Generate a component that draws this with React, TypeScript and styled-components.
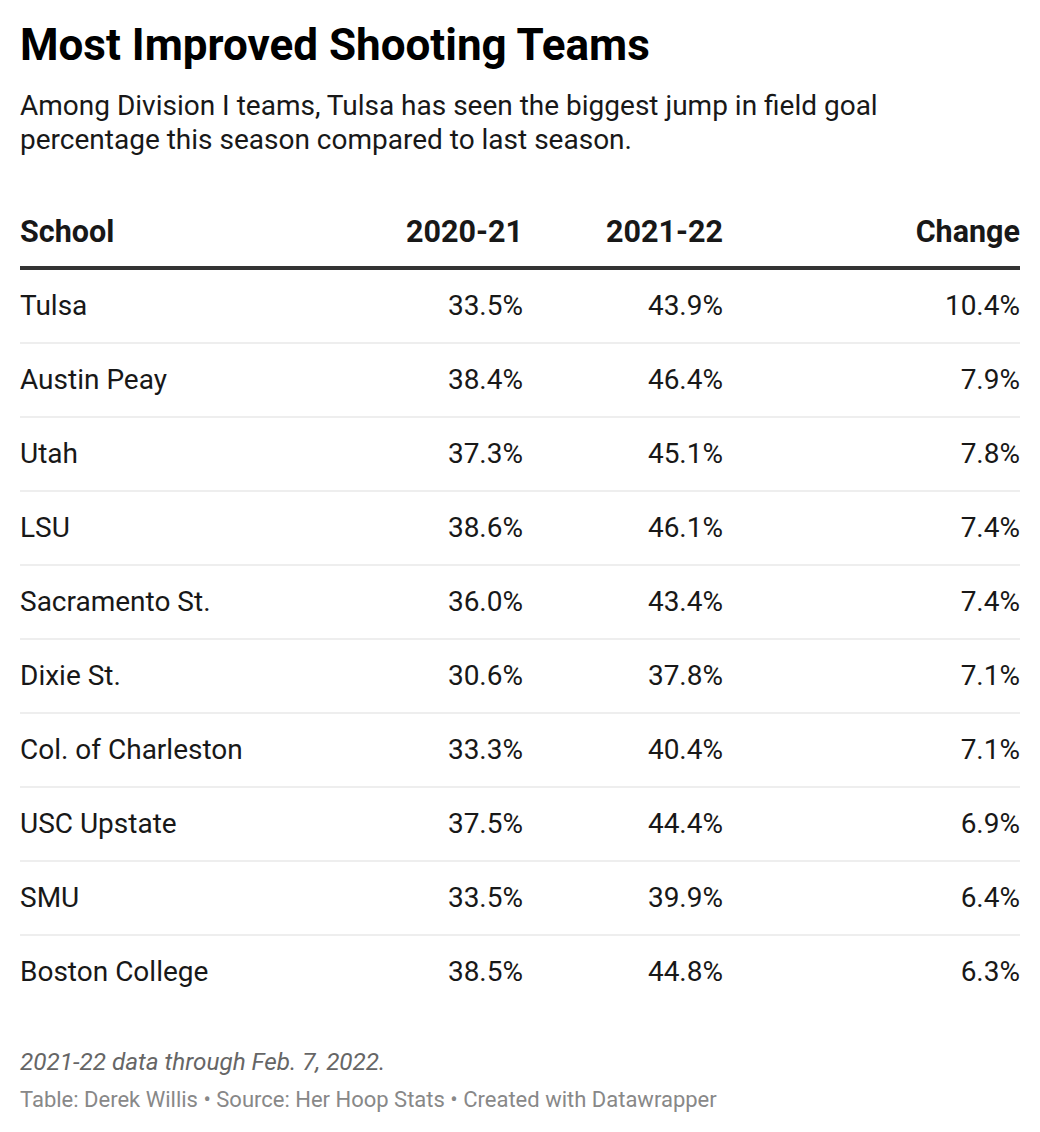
import styled, { createGlobalStyle } from "styled-components";

const rows: [string, string, string, string][] = [
  ["Tulsa", "33.5%", "43.9%", "10.4%"],
  ["Austin Peay", "38.4%", "46.4%", "7.9%"],
  ["Utah", "37.3%", "45.1%", "7.8%"],
  ["LSU", "38.6%", "46.1%", "7.4%"],
  ["Sacramento St.", "36.0%", "43.4%", "7.4%"],
  ["Dixie St.", "30.6%", "37.8%", "7.1%"],
  ["Col. of Charleston", "33.3%", "40.4%", "7.1%"],
  ["USC Upstate", "37.5%", "44.4%", "6.9%"],
  ["SMU", "33.5%", "39.9%", "6.4%"],
  ["Boston College", "38.5%", "44.8%", "6.3%"],
];

const GlobalStyle = createGlobalStyle`
  body {
    margin: 0;
    background: #fff;
    font-family: Roboto, "Liberation Sans", sans-serif;
  }
`;

const App = () => {
  return (
    <>
      <GlobalStyle />
      <Wrapper>
        <Title>Most Improved Shooting Teams</Title>
        <Description>
          Among Division I teams, Tulsa has seen the biggest jump in field goal
          percentage this season compared to last season.
        </Description>
        <Table>
          <HeaderRow>
            <HeadCell>School</HeadCell>
            <HeadCell $right>2020-21</HeadCell>
            <HeadCell $right>2021-22</HeadCell>
            <HeadCell $right>Change</HeadCell>
          </HeaderRow>
          {rows.map((r, i) => (
            <Row key={r[0]} $last={i === rows.length - 1}>
              <Cell>{r[0]}</Cell>
              <Cell $right>{r[1]}</Cell>
              <Cell $right>{r[2]}</Cell>
              <Cell $right>{r[3]}</Cell>
            </Row>
          ))}
        </Table>
        <Notes>2021-22 data through Feb. 7, 2022.</Notes>
        <Byline>
          Table: Derek Willis • Source: Her Hoop Stats • Created with Datawrapper
        </Byline>
      </Wrapper>
    </>
  );
};

const Wrapper = styled.div`
  padding: 21px 20px 20px;
  color: #181818;
`;

const Title = styled.h1`
  margin: 0;
  font-size: 44px;
  line-height: 48px;
  font-weight: 700;
  color: #000;
`;

const Description = styled.p`
  margin: 20px 0 0;
  font-size: 28px;
  line-height: 34px;
  color: #181818;
`;

const Table = styled.div`
  margin-top: 41px;
  display: grid;
  grid-template-columns: 303px 200px 200px 297px;
`;

const HeaderRow = styled.div`
  display: contents;
`;

const HeadCell = styled.div<{ $right?: boolean }>`
  padding: 19px 0;
  font-size: 30.5px;
  line-height: 30px;
  font-weight: 700;
  color: #181818;
  text-align: ${(p) => (p.$right ? "right" : "left")};
  border-bottom: 4px solid #333;
`;

const Row = styled.div<{ $last?: boolean }>`
  display: contents;

  & > div {
    border-bottom: ${(p) => (p.$last ? "2px solid transparent" : "2px solid #eeeeee")};
  }
`;

const Cell = styled.div<{ $right?: boolean }>`
  padding: 21px 0;
  font-size: 28px;
  line-height: 30px;
  text-align: ${(p) => (p.$right ? "right" : "left")};
`;

const Notes = styled.div`
  margin-top: 37px;
  font-size: 24.3px;
  line-height: 30px;
  font-style: italic;
  color: #666;
`;

const Byline = styled.div`
  margin-top: 8px;
  font-size: 22px;
  line-height: 30px;
  color: #888;
`;

export default App;
